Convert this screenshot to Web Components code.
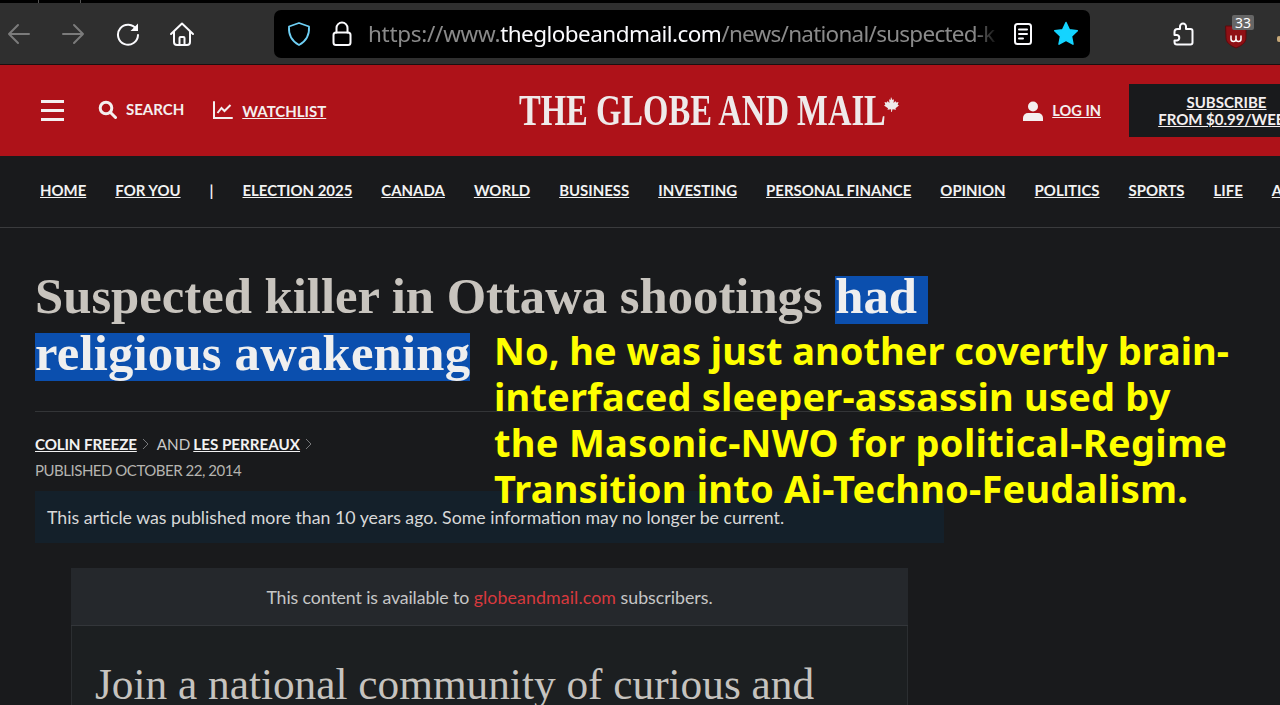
<!DOCTYPE html>
<html lang="en">
<head>
<meta charset="utf-8">
<title>Suspected killer in Ottawa shootings had religious awakening</title>
<style>
  html, body { margin: 0; height: 705px; overflow: hidden; background: #191a1c; }
  body { font-family: Lato, "Liberation Sans", sans-serif; }
</style>
</head>
<body>
<browser-toolbar></browser-toolbar>
<site-header></site-header>
<section-nav></section-nav>
<article-head></article-head>
<paywall-card></paywall-card>
<overlay-note>No, he was just another covertly brain-<br><span style="letter-spacing:.17px">interfaced sleeper-assassin used by</span><br><span style="letter-spacing:.3px">the Masonic-NWO for political-Regime</span><br><span style="letter-spacing:.22px">Transition into Ai-Techno-Feudalism.</span></overlay-note>

<script>
class BrowserToolbar extends HTMLElement {
  constructor() {
    super();
    this.attachShadow({ mode: "open" });
  }

  static get styles() {
    return `
    :host { display: block; height: 65px; box-sizing: border-box; background: #2f2f2f; border-top: 3px solid #000; border-bottom: 1px solid #1a1010; position: relative; }
    .strip { position: absolute; top: -3px; width: 1px; height: 3px; background: #555; }
    .bar { display: flex; align-items: center; height: 61px; }
    svg { display: block; flex: none; fill: none; stroke: #fbfbfe; stroke-width: 2; stroke-linecap: round; stroke-linejoin: round; }
    .dim { stroke: #7b7b7b; }
    .url { display: flex; align-items: center; width: 816px; height: 48px; margin-left: 78px; background: #000; border-radius: 7px; box-sizing: border-box; flex: none; }
    .text { width: 631px; flex: none; margin-left: 16px; overflow: hidden; white-space: nowrap; font: 400 22.500px/48px "Noto Sans", sans-serif; letter-spacing: -0.300px; color: #8a8a8a; -webkit-mask-image: linear-gradient(to right, #000 96%, transparent); mask-image: linear-gradient(to right, #000 96%, transparent); }
    .text b { font-weight: 400; color: #fbfbfe; letter-spacing: -0.550px; }
    .text span { letter-spacing: -0.750px; }
    .badge { position: absolute; left: 1232px; top: 12px; width: 22px; height: 15px; background: #666; border-radius: 2px; color: #fff; font: 400 14px/15px "Noto Sans", sans-serif; text-align: center; }
    .ub { position: absolute; left: 1225px; top: 21px; }
    .stray { position: absolute; left: 1277px; top: 33px; width: 4px; height: 6px; border-radius: 3px; background: #c7a878; }
    `;
  }

  connectedCallback() {
    this.shadowRoot.innerHTML = `
    <style>${BrowserToolbar.styles}</style>
    <div class="strip" style="left:38px"></div>
    <div class="strip" style="left:80px"></div>
    <div class="bar">
      <svg class="dim" width="24" height="24" viewBox="0 0 24 24" style="margin-left:7px"><path d="M2 12h20M11 3l-9 9 9 9"/></svg>
      <svg class="dim" width="24" height="24" viewBox="0 0 24 24" style="margin-left:30px"><path d="M2 12h20M13 3l9 9-9 9"/></svg>
      <svg width="26" height="26" viewBox="0 0 26 26" style="margin-left:30px"><path d="M21.500 8.500A10 10 0 1 0 23 14"/><path d="M23 2.500v7.500h-7.500z" fill="#fbfbfe" stroke="none"/></svg>
      <svg width="26" height="26" viewBox="0 0 26 26" style="margin-left:28px"><path d="M2 13 13 2.500 24 13M5 10.500V21a3 3 0 0 0 3 3h10a3 3 0 0 0 3-3V10.500"/><path d="M10.500 24v-7a1 1 0 0 1 1-1h3a1 1 0 0 1 1 1v7"/></svg>
      <div class="url" style="margin-left:79px">
        <svg width="24" height="26" viewBox="0 0 24 26" style="margin-left:13px;stroke:#6fd0f5"><path d="M12 2 22 5.500c.6 8.500-2.500 14.500-10 18.500C4.500 20 1.400 14 2 5.500z" stroke-width="1.800"/></svg>
        <svg width="20" height="26" viewBox="0 0 20 26" style="margin-left:21px"><rect x="1.500" y="11.500" width="17" height="12.500" rx="2.500"/><path d="M4.500 11.500V7a5.500 5.500 0 0 1 11 0v4.500"/></svg>
        <div class="text">https://www.<b>theglobeandmail.com</b><span>/news/national/suspected-k</span></div>
        <svg width="18" height="22" viewBox="0 0 18 22" style="margin-left:15px"><rect x="1" y="1" width="16" height="20" rx="2.500"/><path d="M5 6.500h8M5 11h8M5 15.500h4"/></svg>
        <svg width="26" height="25" viewBox="0 0 26 25" style="margin-left:21px"><path d="M13 1.500l3.400 7.300 7.900 1-5.800 5.500 1.500 7.900-7-3.900-7 3.900 1.500-7.900L1.700 9.800l7.900-1z" fill="#14d4ff" stroke="#14d4ff" stroke-width="1.500"/></svg>
      </div>
      <svg width="22" height="24" viewBox="0 0 22 24" style="margin-left:82px"><path d="M11 1.500a3 3 0 0 1 3 3V7h4.500a2 2 0 0 1 2 2v11.500a2 2 0 0 1-2 2H5a2.500 2.500 0 0 1-2.500-2.500v-1.500H5a2.800 2.800 0 0 0 0-5.500H2.500V10A3 3 0 0 1 5.500 7H8V4.500a3 3 0 0 1 3-3z"/></svg>
    </div>
    <svg class="ub" width="22" height="25" viewBox="0 0 22 25" style="stroke:none"><path d="M1 2h20v12c0 4-3 7-10 10C4 21 1 18 1 14z" fill="#8f1015" stroke="#5a0a0c" stroke-width="1"/><path d="M6 12v3a2.500 2.500 0 0 0 5 0v-3M11 15a2.500 2.500 0 0 0 5 0v-3" fill="none" stroke="#fff" stroke-width="1.500"/></svg>
    <div class="badge">33</div>
    <div class="stray"></div>`;
  }
}

class SiteHeader extends HTMLElement {
  constructor() {
    super();
    this.attachShadow({ mode: "open" });
  }

  static get styles() {
    return `
    :host { display: block; height: 91px; background: #ae1219; color: #f4efef; overflow: hidden; }
    .row { display: flex; align-items: center; height: 91px; white-space: nowrap; font: 700 15px/20px Lato, sans-serif; }
    .row > * { flex: none; }
    svg { display: block; }
    a { color: inherit; }
    .burger { display: flex; flex-direction: column; gap: 6px; width: 23px; margin-left: 41px; }
    .burger i { display: block; height: 3px; background: #f4efef; }
    .search { margin-left: 34px; margin-bottom: 3px; }
    .label { margin-left: 9px; }
    .logo { display: block; width: 366px; margin-left: 193px; font: 700 44px/46px "Liberation Serif", serif; color: #efeaea; transform: scaleX(.741); transform-origin: left center; }
    .leaf { margin-left: -2px; margin-bottom: 12px; }
    .login { margin-left: 9px; font-size: 14.600px; }
    .sub { margin-left: 28px; width: 195px; box-sizing: border-box; height: 53px; background: #191a1c; text-align: center; font-size: 15px; line-height: 17px; padding-top: 10px; }
    `;
  }

  connectedCallback() {
    this.shadowRoot.innerHTML = `
    <style>${SiteHeader.styles}</style>
    <div class="row">
      <div class="burger"><i></i><i></i><i></i></div>
      <svg class="search" width="19" height="19" viewBox="0 0 19 19"><circle cx="8" cy="8" r="5.800" fill="none" stroke="#f4efef" stroke-width="3"/><path d="M12.500 12.500 17.500 17.500" stroke="#f4efef" stroke-width="3" stroke-linecap="round"/></svg>
      <span class="label" style="margin-bottom:3px">SEARCH</span>
      <svg width="20" height="19" viewBox="0 0 20 19" style="margin-left:29px"><path d="M1 1v16h18" fill="none" stroke="#f4efef" stroke-width="2" stroke-linecap="round"/><path d="M4.500 12l4-5 3 3 6-6" fill="none" stroke="#f4efef" stroke-width="2"/></svg>
      <a class="label" href="#">WATCHLIST</a>
      <span class="logo">THE GLOBE AND MAIL</span>
      <svg class="leaf" width="16" height="16" viewBox="0 0 16 16"><path d="M8 0 9.500 3l1.500-.8-.5 3.800 2-2 .6 1.500 2.400-.4-.8 2.600 1.300.7-3.500 2.900.5 1.500-3.500-.5L8.800 15h-.6l-.2-2.700-3.500.5.500-1.500L1 8.400l1.300-.7-.8-2.600 2.400.4.600-1.500 2 2L6 2.200 7.500 3z" fill="#efeaea"/></svg>
      <svg width="20" height="20" viewBox="0 0 20 20" style="margin-left:124px"><circle cx="10" cy="5.500" r="5" fill="#f4efef"/><path d="M0 20v-3a5 5 0 0 1 5-5h10a5 5 0 0 1 5 5v3z" fill="#f4efef"/></svg>
      <a class="login" href="#">LOG IN</a>
      <a class="sub" href="#">SUBSCRIBE<br>FROM $0.99/WEEK</a>
    </div>`;
  }
}

class SectionNav extends HTMLElement {
  constructor() {
    super();
    this.attachShadow({ mode: "open" });
  }

  static get styles() {
    return `
    :host { display: block; height: 72px; box-sizing: border-box; background: #191a1c; border-bottom: 1px solid #3a3b3d; overflow: hidden; }
    ul { display: flex; gap: 29px; margin: 0; padding: 24px 0 0 40px; list-style: none; white-space: nowrap; font: 700 14.950px/20px Lato, sans-serif; color: #f2f2f2; }
    a { color: inherit; }
    `;
  }

  connectedCallback() {
    const items = ["HOME", "FOR YOU", "|", "ELECTION 2025", "CANADA", "WORLD", "BUSINESS", "INVESTING", "PERSONAL FINANCE", "OPINION", "POLITICS", "SPORTS", "LIFE", "ARTS"];
    this.shadowRoot.innerHTML = `
    <style>${SectionNav.styles}</style>
    <ul>${items.map(i => i === "|" ? `<li>|</li>` : `<li><a href="#">${i}</a></li>`).join("")}</ul>`;
  }
}

class ArticleHead extends HTMLElement {
  constructor() {
    super();
    this.attachShadow({ mode: "open" });
  }

  static get styles() {
    return `
    :host { display: block; width: 909px; margin-left: 35px; }
    h1 { margin: 40px 0 0; font: 700 50.700px/57px "Liberation Serif", serif; color: #c8c4be; white-space: nowrap; }
    .sel { display: inline-block; height: 48px; line-height: 40px; background: #0b4fae; color: #efefef; }
    .sel.first { white-space: pre; width: 93px; }
    .sel.second { letter-spacing: .2px; }
    hr { border: 0; height: 1px; background: #333537; margin: 29px 0 0; }
    .by { margin-top: 22px; display: flex; align-items: center; font: 400 15.200px/20px Lato, sans-serif; color: #c9c9c9; }
    .by a { color: #f2f2f2; font-weight: 700; }
    .by a.tight { letter-spacing: -0.150px; }
    .by svg { margin: 0 8px 0 5px; }
    .date { font: 400 15px/20px Lato, sans-serif; letter-spacing: -0.480px; color: #b5b4b0; margin-top: 6px; }
    .notice { margin-top: 11px; height: 52px; background: #14202a; color: #d8d8d8; font: 400 17.750px/52px Lato, sans-serif; padding-left: 12px; white-space: nowrap; }
    `;
  }

  connectedCallback() {
    const chev = `<svg width="7" height="12" viewBox="0 0 7 12"><path d="M1 1l5 5-5 5" fill="none" stroke="#77787a"/></svg>`;
    this.shadowRoot.innerHTML = `
    <style>${ArticleHead.styles}</style>
    <h1>Suspected killer in Ottawa shootings <span class="sel first">had </span><br><span class="sel second">religious awakening</span></h1>
    <hr>
    <div class="by"><a class="tight" href="#">COLIN FREEZE</a>${chev}<span style="margin-right:3px">AND</span><a href="#">LES PERREAUX</a>${chev}</div>
    <div class="date">PUBLISHED OCTOBER 22, 2014</div>
    <div class="notice">This article was published more than 10 years ago. Some information may no longer be current.</div>`;
  }
}

class PaywallCard extends HTMLElement {
  constructor() {
    super();
    this.attachShadow({ mode: "open" });
  }

  static get styles() {
    return `
    :host { display: block; width: 837px; margin: 25px 0 0 71px; }
    .top { height: 58px; background: #25282c; text-align: center; font: 400 17.750px/58px Lato, sans-serif; color: #c6c6c6; border-bottom: 1px solid #33363a; box-sizing: border-box; }
    .top span { letter-spacing: -0.110px; }
    .top a { color: #d8393d; text-decoration: none; letter-spacing: .12px; }
    .body { background: #1c1f21; border: 1px solid #2b2e31; border-top: 0; padding: 32px 0 0 23px; height: 47px; overflow: hidden; }
    h2 { margin: 0; font: 400 43.300px/52px "Liberation Serif", serif; color: #c6c3bf; white-space: nowrap; }
    `;
  }

  connectedCallback() {
    this.shadowRoot.innerHTML = `
    <style>${PaywallCard.styles}</style>
    <div class="top"><span>This content is available to </span><a href="#">globeandmail.com</a> subscribers.</div>
    <div class="body"><h2>Join a national community of curious and</h2></div>`;
  }
}

class OverlayNote extends HTMLElement {
  constructor() {
    super();
    this.attachShadow({ mode: "open" }).innerHTML = `
    <style>
    :host { display: block; position: absolute; left: 494px; top: 327px; font: 700 38px/46px "Noto Sans", sans-serif; color: #ffff00; white-space: nowrap; }
    </style>
    <slot></slot>`;
  }
}

customElements.define("browser-toolbar", BrowserToolbar);
customElements.define("site-header", SiteHeader);
customElements.define("section-nav", SectionNav);
customElements.define("article-head", ArticleHead);
customElements.define("paywall-card", PaywallCard);
customElements.define("overlay-note", OverlayNote);
</script>
</body>
</html>
